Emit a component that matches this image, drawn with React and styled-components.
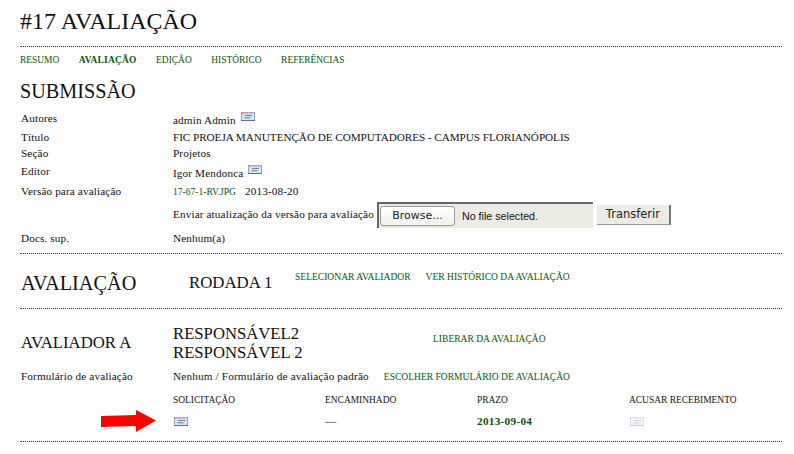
import React from "react";
import styled, { createGlobalStyle } from "styled-components";

const GREEN = "#0a550a";
const RULE = "#006000";
const TEXT = "#111";

const GlobalStyle = createGlobalStyle`
  html, body {
    margin: 0;
    padding: 0;
    background: #fff;
    overflow: hidden;
  }
  body {
    font-family: "Liberation Serif", "Times New Roman", serif;
    color: ${TEXT};
  }
`;

const Page = styled.div`
  position: relative;
  width: 762px;
  height: 454px;
  margin-left: 20px;
`;

const Title = styled.h1`
  margin: 0;
  height: 47px;
  box-sizing: border-box;
  padding-top: 8px;
  font-size: 24px;
  line-height: 27px;
  font-weight: normal;
  border-bottom: 1px dotted ${RULE};
`;

const Tabs = styled.div`
  display: flex;
  gap: 19.5px;
  margin-top: 6px;
  height: 14px;
  align-items: center;
`;

const Tab = styled.a`
  font-size: 9.45px;
  line-height: 14px;
  color: ${GREEN};
  font-weight: ${({ $active }) => ($active ? "bold" : "normal")};
  letter-spacing: ${({ $active }) => ($active ? 0.22 : 0)}px;
`;

const SectionTitle = styled.h2`
  margin: 12px 0 0;
  font-size: 20.2px;
  line-height: 24px;
  font-weight: normal;
`;

const InfoGrid = styled.div`
  display: grid;
  grid-template-columns: 153px 1fr;
  margin-top: 5px;
  padding-bottom: 5px;
  border-bottom: 1px dotted ${RULE};
`;

const Label = styled.div`
  padding-left: 1px;
  font-size: 11.2px;
  letter-spacing: 0.13px;
  line-height: 14px;
  height: ${({ $h }) => $h}px;
  display: flex;
  align-items: center;
`;

const Value = styled.div`
  box-sizing: border-box;
  font-size: 11.2px;
  letter-spacing: ${({ $caps }) => ($caps ? -0.05 : 0.13)}px;
  line-height: 14px;
  height: ${({ $h }) => $h}px;
  padding-top: ${({ $drop }) => $drop || 0}px;
  display: flex;
  align-items: center;
  white-space: nowrap;
`;

const Link = styled.a`
  font-size: 9.55px;
  letter-spacing: 0;
  color: ${GREEN};
  white-space: nowrap;
`;

const FileLink = styled(Link)`
  margin-top: 1px;
`;

const DateText = styled.span`
  margin-left: 9px;
`;

const FileBox = styled.div`
  display: flex;
  align-items: center;
  box-sizing: border-box;
  width: 216px;
  height: 26px;
  margin: 2px 0 0 3px;
  padding-left: 1px;
  background: #ecebe4;
  border-left: 2px solid #666;
  border-top: 2px solid #666;
  font-family: "Liberation Sans", Arial, sans-serif;
  font-size: 10.7px;
  letter-spacing: 0;
`;

const BrowseButton = styled.div`
  box-sizing: border-box;
  width: 75px;
  height: 20px;
  margin-right: 7px;
  background: linear-gradient(#fff, #f1f0ec);
  border: 1px solid #9a9a94;
  border-radius: 3px;
  text-align: center;
  font-family: "DejaVu Sans", sans-serif;
  font-size: 11px;
  line-height: 18px;
  color: #222;
`;

const SubmitButton = styled.div`
  box-sizing: border-box;
  width: 74px;
  height: 20px;
  margin: 2px 0 0 4px;
  background: #ecebe4;
  border-right: 2px solid #777;
  border-bottom: 1px solid #999;
  text-align: center;
  font-family: "DejaVu Sans", sans-serif;
  font-size: 11.5px;
  letter-spacing: 0;
  line-height: 18px;
  color: #222;
`;

const RoundRow = styled.div`
  display: flex;
  align-items: center;
  height: 54px;
  border-bottom: 1px dotted ${RULE};
  padding-left: 1px;
`;

const RoundHeading = styled.h2`
  margin: 4px 0 0;
  width: 168px;
  font-size: 20.3px;
  line-height: 24px;
  font-weight: normal;
`;

const RoundName = styled.h3`
  margin: 4px 0 0;
  width: 106px;
  font-size: 16.8px;
  line-height: 20px;
  font-weight: normal;
`;

const RoundLinks = styled.div`
  display: flex;
  gap: 15px;
  margin-top: -10px;
`;

const ReviewerHead = styled.div`
  display: grid;
  grid-template-columns: 153px 260px 1fr;
  align-items: center;
  margin-top: 15px;
  height: 38px;
`;

const ReviewerLetter = styled.h3`
  margin: 0;
  padding-left: 1px;
  font-size: 16.7px;
  line-height: 20px;
  font-weight: normal;
`;

const ReviewerName = styled.div`
  font-size: 16.7px;
  line-height: 19px;
`;

const ReleaseLink = styled(Link)`
  display: block;
  align-self: start;
  margin-top: 9px;
`;

const ReviewForm = styled.div`
  display: grid;
  grid-template-columns: 153px 1fr;
  align-items: center;
  margin-top: 7px;
  height: 14px;
  font-size: 11.2px;
  letter-spacing: 0.17px;
  & > :first-child {
    padding-left: 1px;
    letter-spacing: 0.13px;
  }
`;

const FormValue = styled.div`
  display: flex;
  gap: 15px;
  align-items: center;
`;

const Schedule = styled.div`
  display: grid;
  grid-template-columns: 153px repeat(3, 152px) 1fr;
  grid-template-rows: 14px 20px;
  row-gap: 4px;
  align-items: center;
  margin-top: 10px;
  padding-bottom: 10px;
  border-bottom: 1px dotted ${RULE};
`;

const ColHead = styled.div`
  font-size: 9.45px;
  grid-row: 1;
  grid-column: ${({ $col }) => $col};
`;

const Cell = styled.div`
  font-size: 11.2px;
  grid-row: 2;
  grid-column: ${({ $col }) => $col};
  color: ${({ $green }) => ($green ? GREEN : "inherit")};
  font-weight: ${({ $green }) => ($green ? "bold" : "normal")};
  letter-spacing: ${({ $green }) => ($green ? 0.3 : 0)}px;
  display: flex;
  align-items: center;
`;

const Arrow = styled.svg`
  position: absolute;
  left: 81px;
  top: 409px;
`;

const MailSvg = styled.svg`
  display: inline-block;
  flex: none;
  margin-left: ${({ $ml }) => $ml || 0}px;
  margin-top: ${({ $mt }) => $mt || 0}px;
  opacity: ${({ $faded }) => ($faded ? 0.35 : 1)};
`;

const MailIcon = ({ ml, mt, faded }) => (
  <MailSvg width="14" height="9" viewBox="0 0 14 9" $ml={ml} $mt={mt} $faded={faded}>
    <rect width="14" height="9" fill="#dbe5f0" />
    <path d="M0 0h14v1.5H0z" fill="#a9b6d6" />
    <path d="M1 0h2v1.5H1zM5 0h2v1.5H5zM9 0h2v1.5H9z" fill="#e0899c" />
    <path d="M0 0h.8v9H0zM13.2 0h.8v9h-.8z" fill="#8299b3" />
    <path d="M0 8h14v1H0z" fill="#5f7083" />
    <path d="M4 3h7v1H4zM3.5 5.3h6v1h-6z" fill="#5f86b3" />
  </MailSvg>
);

const App = () => (
  <Page>
    <GlobalStyle />
    <Title>#17 AVALIAÇÃO</Title>
    <Tabs>
      <Tab>RESUMO</Tab>
      <Tab $active>AVALIAÇÃO</Tab>
      <Tab>EDIÇÃO</Tab>
      <Tab>HISTÓRICO</Tab>
      <Tab>REFERÊNCIAS</Tab>
    </Tabs>
    <SectionTitle>SUBMISSÃO</SectionTitle>
    <InfoGrid>
      <Label $h={20}>Autores</Label>
      <Value $h={20} $drop={3}>admin Admin<MailIcon ml={5} mt={-7} /></Value>
      <Label $h={18}>Título</Label>
      <Value $h={18} $caps>FIC PROEJA MANUTENÇÃO DE COMPUTADORES - CAMPUS FLORIANÓPOLIS</Value>
      <Label $h={14}>Seção</Label>
      <Value $h={14}>Projetos</Value>
      <Label $h={22}>Editor</Label>
      <Value $h={22} $drop={3}>Igor Mendonca<MailIcon ml={5} mt={-7} /></Value>
      <Label $h={18}>Versão para avaliação</Label>
      <Value $h={18}><FileLink>17-67-1-RV.JPG</FileLink><DateText>2013-08-20</DateText></Value>
      <Label $h={27} />
      <Value $h={27}>
        Enviar atualização da versão para avaliação
        <FileBox>
          <BrowseButton>Browse...</BrowseButton>
          No file selected.
        </FileBox>
        <SubmitButton>Transferir</SubmitButton>
      </Value>
      <Label $h={21}>Docs. sup.</Label>
      <Value $h={21}>Nenhum(a)</Value>
    </InfoGrid>
    <RoundRow>
      <RoundHeading>AVALIAÇÃO</RoundHeading>
      <RoundName>RODADA 1</RoundName>
      <RoundLinks>
        <Link>SELECIONAR AVALIADOR</Link>
        <Link>VER HISTÓRICO DA AVALIAÇÃO</Link>
      </RoundLinks>
    </RoundRow>
    <ReviewerHead>
      <ReviewerLetter>AVALIADOR A</ReviewerLetter>
      <ReviewerName>RESPONSÁVEL2<br />RESPONSÁVEL 2</ReviewerName>
      <ReleaseLink>LIBERAR DA AVALIAÇÃO</ReleaseLink>
    </ReviewerHead>
    <ReviewForm>
      <div>Formulário de avaliação</div>
      <FormValue>
        Nenhum / Formulário de avaliação padrão
        <Link>ESCOLHER FORMULÁRIO DE AVALIAÇÃO</Link>
      </FormValue>
    </ReviewForm>
    <Schedule>
      <ColHead $col={2}>SOLICITAÇÃO</ColHead>
      <ColHead $col={3}>ENCAMINHADO</ColHead>
      <ColHead $col={4}>PRAZO</ColHead>
      <ColHead $col={5}>ACUSAR RECEBIMENTO</ColHead>
      <Cell $col={2}><MailIcon ml={1} /></Cell>
      <Cell $col={3}>—</Cell>
      <Cell $col={4} $green>2013-09-04</Cell>
      <Cell $col={5}><MailIcon ml={1} faded /></Cell>
    </Schedule>
    <Arrow width="56" height="26" viewBox="0 0 56 26">
      <path d="M0 7L35 6V1L55 11.5L35 23V17L0 18Z" fill="#f00" />
    </Arrow>
  </Page>
);

export default App;
